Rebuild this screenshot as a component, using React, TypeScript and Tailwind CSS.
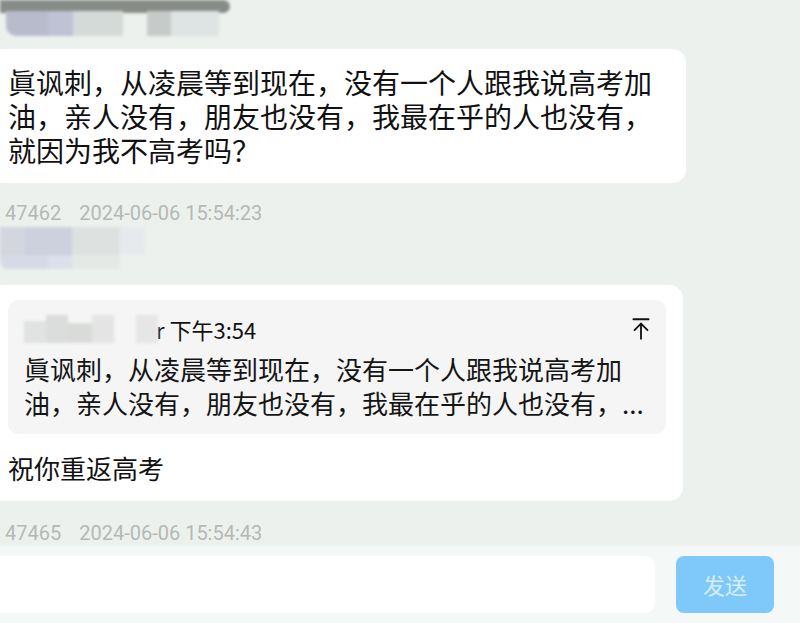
import { ArrowUpToLine } from "lucide-react";

const CJK = "font-['Noto_Sans_CJK_SC',sans-serif]";

const QUOTE_LINES = [
  "眞讽刺，从凌晨等到现在，没有一个人跟我说高考加",
  "油，亲人没有，朋友也没有，我最在乎的人也没有，...",
];

function Meta({ id, time }: { id: string; time: string }) {
  return (
    <div className="ml-[5px] flex gap-[18px] font-['Roboto',sans-serif] text-[20px] leading-[22px] text-[#b5b8b6]">
      <span>{id}</span>
      <span>{time}</span>
    </div>
  );
}

export default function App() {
  return (
    <div className={`flex h-[623px] w-[800px] flex-col overflow-hidden bg-[#edf1ee] ${CJK}`}>
      {/* blurred sender name */}
      <div className="relative h-[40px] blur-[1.5px]">
        <div className="absolute left-0 top-0 h-[13px] w-[230px] rounded-r-full bg-[#878c87]" />
        <div className="absolute left-[6px] top-[11px] flex h-[25px]">
          <div className="w-[42px] rounded-bl-[10px] bg-[#b8bbcb]" />
          <div className="w-[25px] bg-[#bfc1d5]" />
          <div className="w-[50px] bg-[#d4dad7]" />
          <div className="w-[24px]" />
          <div className="w-[24px] bg-[#c6cbc9]" />
          <div className="w-[48px] bg-[#dde4e3]" />
        </div>
      </div>

      <div className="ml-[-12px] mt-[9px] w-[698px] rounded-[14px] bg-white py-4 pl-[20px] pr-[18px] text-[28px] leading-[34px] text-[#111]">
        眞讽刺，从凌晨等到现在，没有一个人跟我说高考加油，亲人没有，朋友也没有，我最在乎的人也没有，就因为我不高考吗？
      </div>

      <div className="mt-[19px]">
        <Meta id="47462" time="2024-06-06 15:54:23" />
      </div>

      {/* blurred sender name */}
      <div className="mt-[3px] flex h-[45px] flex-col blur-[1.5px]">
        <div className="flex h-[28px]">
          <div className="w-[25px] bg-[#d3d6df]" />
          <div className="w-[47px] bg-[#cdd0dd]" />
          <div className="w-[48px] bg-[#dde2e0]" />
          <div className="w-[25px] bg-[#e7eaed]" />
        </div>
        <div className="flex h-[14px]">
          <div className="w-[48px] rounded-bl-[8px] bg-[#d6dae4]" />
          <div className="w-[24px] bg-[#dbe0ea]" />
          <div className="w-[48px] bg-[#e4e9e6]" />
        </div>
      </div>

      <div className="ml-[-12px] mt-[13px] w-[695px] rounded-[14px] bg-white pb-[15px] pl-[20px] pr-[17px] pt-[15px]">
        <div className="rounded-[10px] bg-[#f5f5f5] pb-[14px] pl-[16px] pr-[14px] pt-[14px]">
          <div className="flex h-[30px] items-center text-[22px] text-[#111]">
            <div className="flex h-[28px] w-[134px] blur-[1.5px]">
              <div className="mt-[6px] h-[22px] w-[22px] bg-[#e0e3e1]" />
              <div className="w-[22px] bg-[#dadddb]" />
              <div className="mt-[8px] w-[24px] bg-[#d9dbd9]" />
              <div className="w-[22px] bg-[#e4e4e4]" />
              <div className="w-[22px]" />
              <div className="w-[22px] bg-[#e6e6e6]" />
            </div>
            <span className="ml-[-2px]">r 下午3:54</span>
            <ArrowUpToLine className="ml-auto mr-[-2px] h-[26px] w-[26px] text-[#111]" strokeWidth={1.7} />
          </div>
          <div className="mt-[8px] text-[26px] leading-[34px] text-[#151515]">
            {QUOTE_LINES.map((l) => (
              <div key={l} className="whitespace-nowrap">
                {l}
              </div>
            ))}
          </div>
        </div>
        <div className="mt-[16px] text-[26px] leading-[36px] text-[#111]">祝你重返高考</div>
      </div>

      <div className="mt-[21px]">
        <Meta id="47465" time="2024-06-06 15:54:43" />
      </div>

      {/* input bar */}
      <div className="mt-[2px] flex flex-1 items-start gap-[21px] bg-[#f4f8f6] pt-[10px]">
        <div className="ml-[-12px] h-[57px] w-[667px] rounded-[10px] bg-white" />
        <button className="flex h-[57px] w-[98px] items-center justify-center rounded-[8px] bg-[#7ec9f9] text-[22px] text-[#d7edfc]">
          发送
        </button>
      </div>
    </div>
  );
}
